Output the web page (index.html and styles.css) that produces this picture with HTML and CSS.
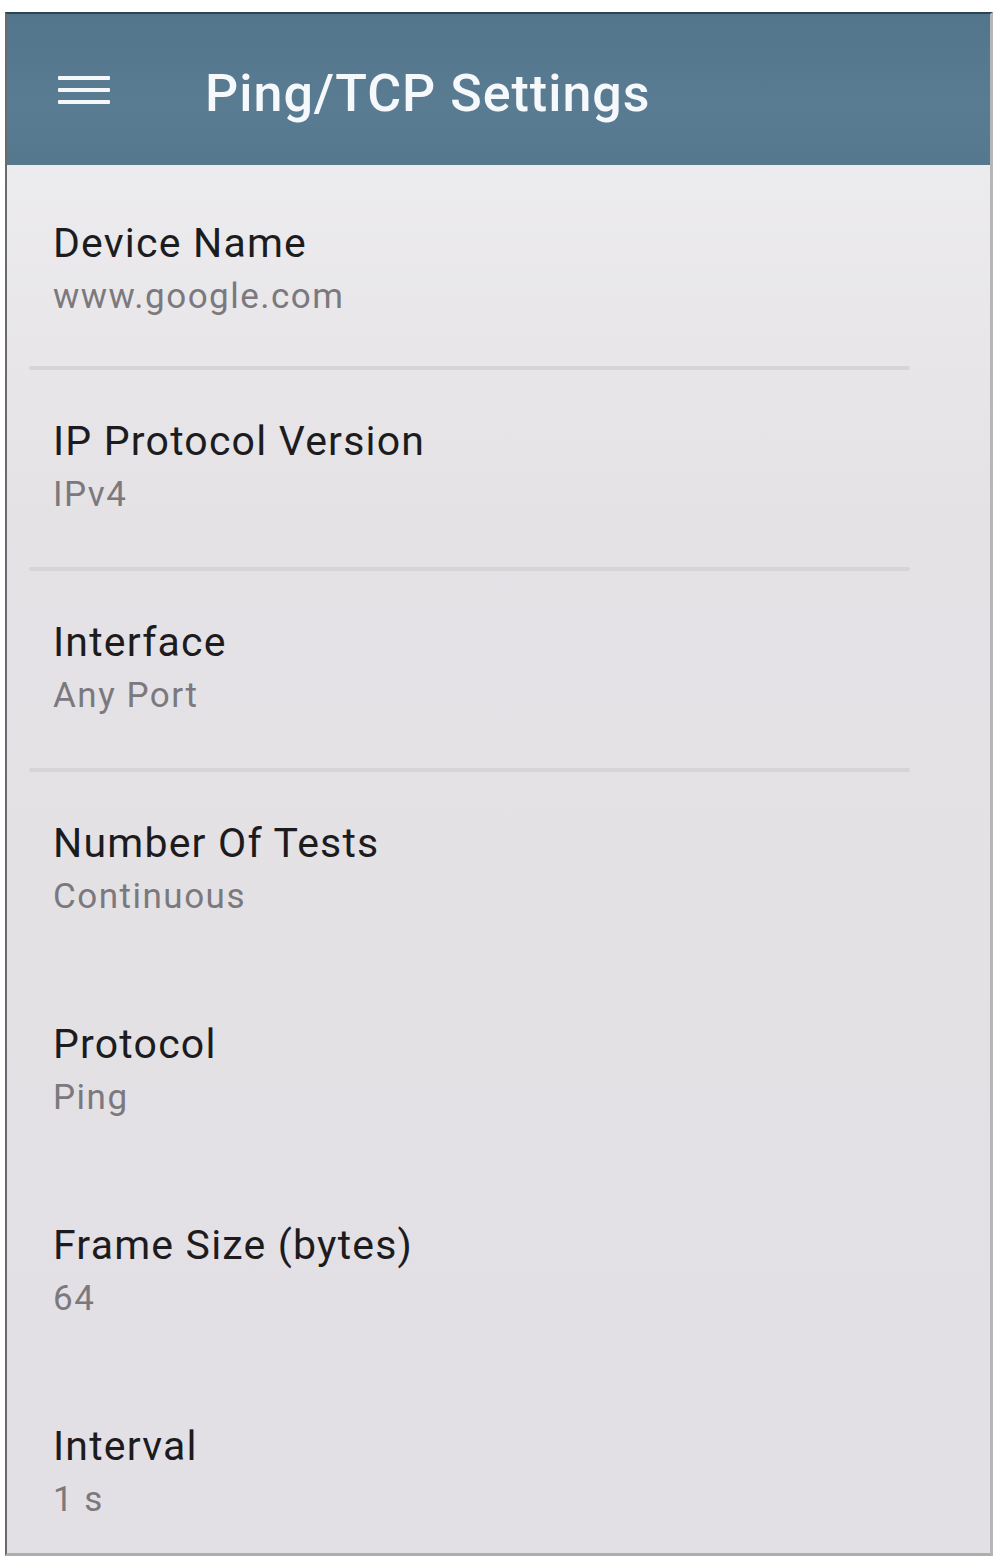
FILE: index.html
```html
<!DOCTYPE html>
<html>
<head>
<meta charset="utf-8">
<link rel="stylesheet" href="styles.css">
</head>
<body>
<div class="phone">
  <header class="appbar">
    <svg class="menu" width="52" height="30" viewBox="0 0 52 30">
      <rect x="0" y="1" width="52" height="4" rx="1" fill="#f4f8fb"/>
      <rect x="0" y="13" width="52" height="4" rx="1" fill="#f4f8fb"/>
      <rect x="0" y="25" width="52" height="4" rx="1" fill="#f4f8fb"/>
    </svg>
    <h1 class="title">Ping/TCP Settings</h1>
  </header>
  <main class="list">
    <div class="row first sep"><div class="label">Device Name</div><div class="value">www.google.com</div></div>
    <div class="row sep"><div class="label">IP Protocol Version</div><div class="value">IPv4</div></div>
    <div class="row sep"><div class="label">Interface</div><div class="value">Any Port</div></div>
    <div class="row"><div class="label">Number Of Tests</div><div class="value">Continuous</div></div>
    <div class="row"><div class="label">Protocol</div><div class="value">Ping</div></div>
    <div class="row"><div class="label">Frame Size (bytes)</div><div class="value">64</div></div>
    <div class="row"><div class="label">Interval</div><div class="value">1 s</div></div>
  </main>
</div>
</body>
</html>
```
FILE: styles.css
```css
html, body {
  margin: 0;
  padding: 0;
  background: #ffffff;
}
body {
  font-family: Roboto, "Liberation Sans", sans-serif;
  width: 998px;
  height: 1562px;
  overflow: hidden;
}
.phone {
  margin: 12px 0 0 5px;
  width: 988px;
  height: 1544px;
  box-sizing: border-box;
  border-left: 2px solid #6a6a6a;
  border-top: 2px solid #2c4352;
  border-right: 3px solid #b8b5b9;
  border-bottom: 3px solid #b0adb1;
  background: #e4e1e5;
  display: flex;
  flex-direction: column;
  overflow: hidden;
}
.appbar {
  height: 151px;
  flex: none;
  background: linear-gradient(#52758c, #5a7c93 60%, #56788d);
  display: flex;
  align-items: center;
  box-shadow: 0 2px 3px rgba(0,0,0,0.25);
}
.menu {
  margin-left: 51px;
  flex: none;
}
.title {
  margin: 0 0 0 95px;
  font-size: 52px;
  font-weight: 500;
  color: #f6f9fc;
  letter-spacing: 1px;
  position: relative;
  top: 4px;
}
.list {
  flex: 1;
  background: linear-gradient(#ecebed, #e5e2e6 25%, #e3e0e5);
}
.row {
  height: 201px;
  box-sizing: border-box;
  padding: 49px 0 0 46px;
  position: relative;
}
.row.first {
  height: 203px;
  padding-top: 54px;
}
.row.sep::after {
  content: "";
  position: absolute;
  left: 22px;
  right: 80px;
  bottom: -2px;
  height: 4px;
  background: #d7d4d8;
  border-radius: 2px;
}
.label {
  font-size: 41px;
  line-height: 48px;
  color: #1c1c1f;
  letter-spacing: 1.2px;
}
.value {
  margin-top: 10px;
  font-size: 35px;
  line-height: 40px;
  color: #7b797d;
  letter-spacing: 1.5px;
}
```
